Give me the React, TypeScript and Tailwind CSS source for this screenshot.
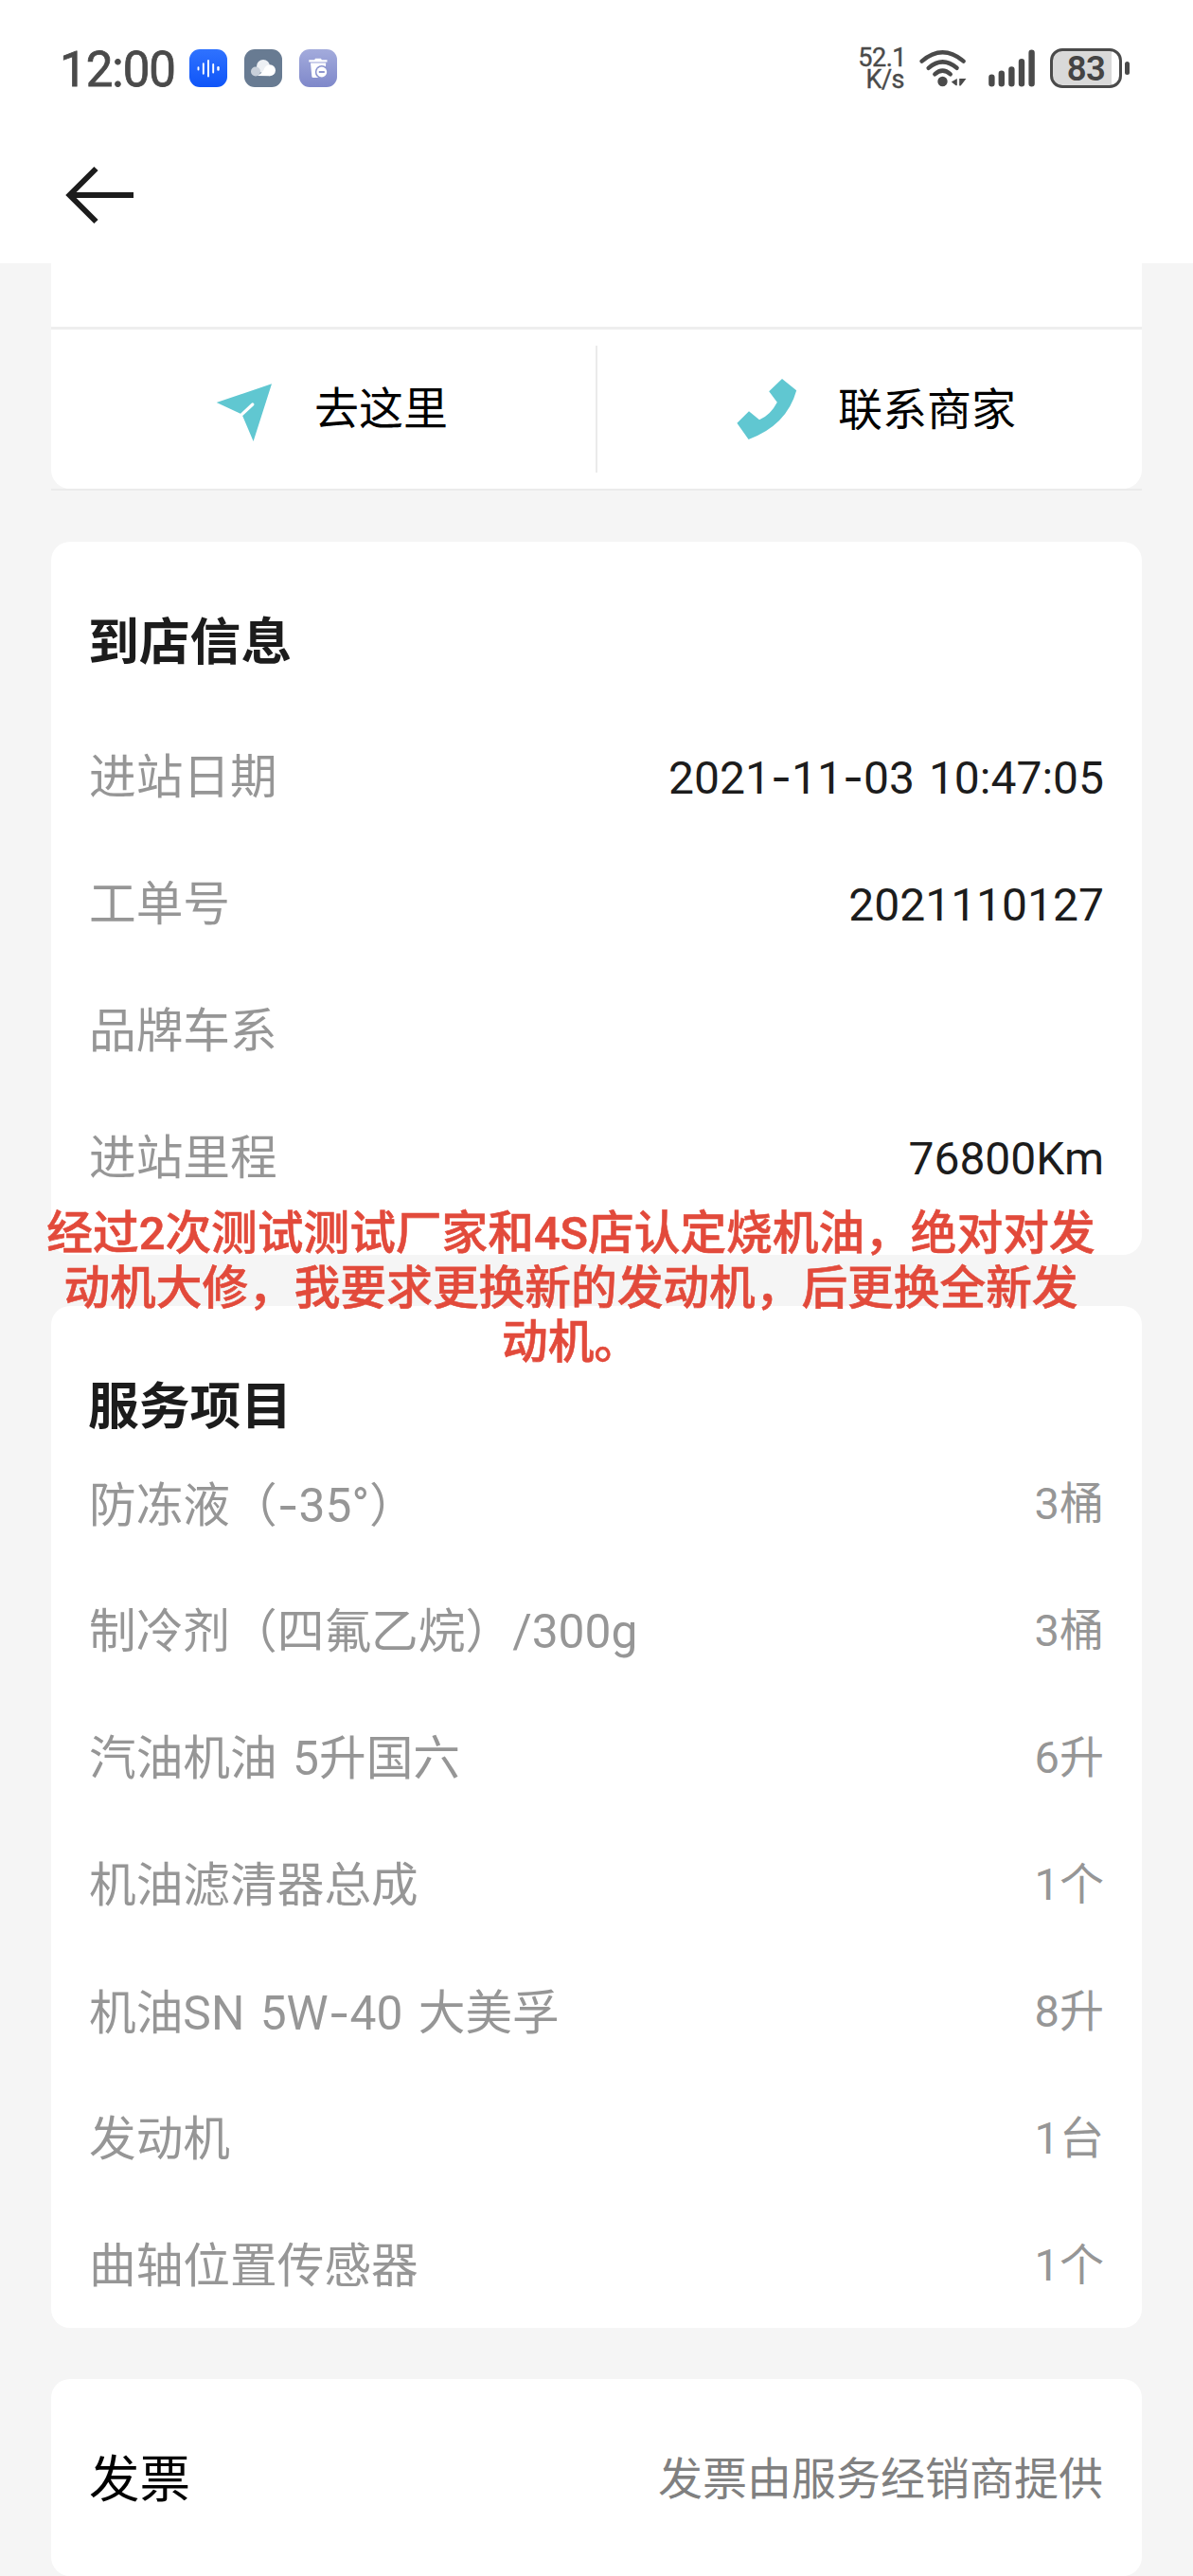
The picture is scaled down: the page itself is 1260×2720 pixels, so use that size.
import React from "react";

const FONT = "font-['Roboto','Noto_Sans_CJK_SC',sans-serif]";

const visitInfo = [
  { label: "进站日期", value: "2021-11-03 10:47:05" },
  { label: "工单号", value: "2021110127" },
  { label: "品牌车系", value: "" },
  { label: "进站里程", value: "76800Km" },
];

const serviceItems = [
  { label: "防冻液（-35°）", value: "3桶" },
  { label: "制冷剂（四氟乙烷）/300g", value: "3桶" },
  { label: "汽油机油 5升国六", value: "6升" },
  { label: "机油滤清器总成", value: "1个" },
  { label: "机油SN 5W-40 大美孚", value: "8升" },
  { label: "发动机", value: "1台" },
  { label: "曲轴位置传感器", value: "1个" },
];

/** Sets hyphens in a font whose hyphen is as wide as a digit's body. */
function Dashed({ text }: { text: string }) {
  return (
    <>
      {text.split("-").map((part, i) => (
        <React.Fragment key={i}>
          {i > 0 && <span className="font-['Inter'] leading-none">-</span>}
          {part}
        </React.Fragment>
      ))}
    </>
  );
}

function VoiceIcon() {
  return (
    <svg width="40" height="40" viewBox="0 0 40 40">
      <defs>
        <linearGradient id="voice" x1="0" y1="0" x2="0" y2="1">
          <stop offset="0" stopColor="#2f72ff" />
          <stop offset="1" stopColor="#0f55f8" />
        </linearGradient>
      </defs>
      <rect width="40" height="40" rx="11" fill="url(#voice)" />
      <g stroke="#fff" strokeWidth="1.9" strokeLinecap="round">
        <path d="M9.5 19.2v2.4M14.8 15.2v10.6M20 12v16.5M25.2 16v8.6" />
        <path d="M30.5 19.2v2.4" strokeWidth="2.4" />
      </g>
    </svg>
  );
}

function CloudIcon() {
  return (
    <svg width="40" height="40" viewBox="0 0 40 40">
      <rect width="40" height="40" rx="11" fill="#687b92" />
      <circle cx="20" cy="18" r="7" fill="#edf0f4" />
      <circle cx="27" cy="22.3" r="6" fill="#fff" />
      <path d="M13 28 Q19 26 22 19 L27 28.3 Z" fill="#fff" />
      <circle cx="12" cy="23.5" r="5" fill="#c9d0da" />
    </svg>
  );
}

function TrashIcon() {
  return (
    <svg width="40" height="40" viewBox="0 0 40 40">
      <defs>
        <linearGradient id="trash" x1="0" y1="0" x2="0" y2="1">
          <stop offset="0" stopColor="#a3abdc" />
          <stop offset="1" stopColor="#7f88ca" />
        </linearGradient>
      </defs>
      <rect width="40" height="40" rx="11" fill="url(#trash)" />
      <path d="M17 9.8h6l.8 1.4h5.7v2.2H10.3v-2.2h5.9z" fill="#fff" />
      <path d="M12 14.5h16.2l-1 15.5H14.8q-1.4 0-1.5-1.5z" fill="#fff" />
      <circle cx="23.8" cy="24" r="7" fill="#8c95d0" />
      <circle cx="23.8" cy="24" r="5.4" fill="#fff" />
      <path d="M20.8 24h6" stroke="#8790cd" strokeWidth="1.9" />
    </svg>
  );
}

function WifiIcon() {
  return (
    <svg width="50" height="42" viewBox="0 0 50 42">
      <g fill="none" stroke="#4a4a4a" strokeWidth="4.4" strokeLinecap="round">
        <path d="M2.6 13.6 Q24.5 -5 46.6 13.6" />
        <path d="M9.6 20.8 Q24.5 8 39.6 20.8" />
        <path d="M16.3 27.3 Q24.5 20 32.8 27.3" />
      </g>
      <circle cx="24.5" cy="35" r="5.2" fill="#4a4a4a" />
      <path d="M33.8 35.4 L39.8 32 V39.2 H38.5 Z" fill="#4a4a4a" />
      <path d="M42.2 32 H49.5 L43.6 39.4 H42.2 Z" fill="#4a4a4a" />
    </svg>
  );
}

function SignalIcon() {
  return (
    <svg width="50" height="42" viewBox="0 0 50 42">
      <g stroke="#4a4a4a" strokeWidth="6.4" strokeLinecap="round">
        <path d="M3.4 30.8V37.2M13.8 26.8V37.2M24.4 22.4V37.2M35 14.2V37.2M45.6 4.8V37.2" />
      </g>
    </svg>
  );
}

function BatteryIcon() {
  return (
    <div className="flex items-center gap-[3px]">
      <div className="flex h-[42px] w-[76px] items-center justify-center rounded-[13px] border-[3.5px] border-[#4a4a4a] bg-linear-to-r from-[#d9d9d9] from-88% to-white to-88%">
        <span className="mt-[2px] text-[36.5px] leading-none font-semibold tracking-[-0.5px] text-[#444]">83</span>
      </div>
      <div className="h-[14px] w-[5px] rounded-full bg-[#4a4a4a]" />
    </div>
  );
}

function StatusBar() {
  return (
    <div className="flex h-[93px] items-end justify-between pr-[67px] pl-[63px] text-[#4a4a4a]">
      <div className="flex h-[41px] items-start">
        <span className="mt-[-4px] w-[137px] text-[51px] leading-none tracking-[-1px] whitespace-nowrap [-webkit-text-stroke:0.8px_#4a4a4a]">12:00</span>
        <div className="flex gap-[18px]">
          <VoiceIcon />
          <CloudIcon />
          <TrashIcon />
        </div>
      </div>
      <div className="flex h-[42px] items-center">
        <div className="mt-[2px] mr-[14px] text-right text-[27px] leading-none tracking-[-0.5px] [-webkit-text-stroke:0.4px_#4a4a4a]">
          <div className="h-[23px] leading-[23px]">52.1</div>
          <div className="h-[23px] pr-[2px] leading-[23px]">K/s</div>
        </div>
        <WifiIcon />
        <div className="mr-[15px] ml-[23px]">
          <SignalIcon />
        </div>
        <BatteryIcon />
      </div>
    </div>
  );
}

function Row({ label, value, muted = false }: { label: string; value: string; muted?: boolean }) {
  return (
    <div className="flex h-[134px] items-center justify-between whitespace-nowrap">
      <span className="-ml-px pt-[6px] text-[49.7px] leading-none [word-spacing:4px] text-[#969696]">
        <Dashed text={label} />
      </span>
      {muted ? (
        <span className="-mr-px pt-px text-[47px] leading-none text-[#969696]">{value}</span>
      ) : (
        <span className="-mr-px pt-[5px] text-[48px] leading-none [word-spacing:3px] text-[#1c1c1c]">
          <Dashed text={value} />
        </span>
      )}
    </div>
  );
}

export default function App() {
  return (
    <div className={`${FONT} relative h-[2720px] w-[1260px] overflow-hidden bg-[#f5f5f5]`}>
      <header className="h-[278px] bg-white">
        <StatusBar />
        <svg className="mt-[79px] ml-[66px]" width="80" height="68" viewBox="0 0 80 68">
          <path d="M75 34H8M35.5 6 L7.5 34 L35.5 62" fill="none" stroke="#1c1c1c" strokeWidth="6" />
        </svg>
      </header>

      <main className="px-[54px]">
        <section className="h-[240px] border-b-2 border-[#ebebeb]">
          <div className="flex h-[238px] flex-col rounded-b-[20px] bg-white">
            <div className="h-[67px]" />
            <div className="h-[3px] bg-[#eeeeee]" />
            <div className="flex flex-1 items-center">
              <div className="flex w-[575px] items-center pl-[170px]">
                <svg className="mt-[6px]" width="70" height="70" viewBox="224 400 70 70">
                  <path d="M228.7 425 L287 405.3 L267.6 466 L255.5 437.5 Z" fill="#60c7d1" />
                  <path d="M254.6 438.4 L266.8 427" stroke="#fff" strokeWidth="3.2" strokeLinecap="round" />
                </svg>
                <span className="ml-[38px] pb-[2px] text-[47px] leading-none text-black">去这里</span>
              </div>
              <div className="h-[134px] w-[2px] bg-[#ebebeb]" />
              <div className="flex w-[575px] items-center pl-[142px]">
                <svg width="70" height="70" viewBox="773 397 70 70">
                  <path
                    d="M826 400 L841.2 412.3 Q831 449 790.6 464 L778.4 446.7 L791 434.3 L802 443.3 Q814 438 820.8 424.7 L812.2 413.3 Z"
                    fill="#60c7d1"
                  />
                </svg>
                <span className="ml-[42px] text-[47px] leading-none text-black">联系商家</span>
              </div>
            </div>
          </div>
        </section>

        <section className="mt-[54px] h-[753px] rounded-[20px] bg-white px-[41px] pt-[71px]">
          <h2 className="mb-[37px] -ml-[2px] flex h-[72px] items-center text-[53.8px] font-bold text-[#1c1c1c]">到店信息</h2>
          {visitInfo.map((r) => (
            <Row key={r.label} {...r} />
          ))}
        </section>

        <section className="mt-[54px] h-[1079px] rounded-[20px] bg-white px-[41px] pt-[71px]">
          <h2 className="-mb-[2px] -ml-[2px] flex h-[72px] items-center text-[53.8px] font-bold text-[#1c1c1c]">服务项目</h2>
          {serviceItems.map((r) => (
            <Row key={r.label} {...r} muted />
          ))}
        </section>

        <section className="mt-[54px] flex h-[208px] items-center justify-between rounded-[20px] bg-white px-[41px]">
          <span className="-ml-px pt-[5px] text-[53.5px] leading-none text-black">发票</span>
          <span className="pt-[2px] text-[47px] leading-none text-[#808080]">发票由服务经销商提供</span>
        </section>
      </main>

      {/* Caption laid over the gap between the two cards */}
      <p className="absolute top-[1274px] left-[28px] w-[1150px] text-center text-[48.7px] leading-[57.5px] font-medium whitespace-nowrap text-[#e24a3b] [-webkit-text-stroke:0.6px_#e24a3b]">
        经过2次测试测试厂家和4S店认定烧机油，绝对对发
        <br />
        动机大修，我要求更换新的发动机，后更换全新发
        <br />
        动机。
      </p>
    </div>
  );
}
